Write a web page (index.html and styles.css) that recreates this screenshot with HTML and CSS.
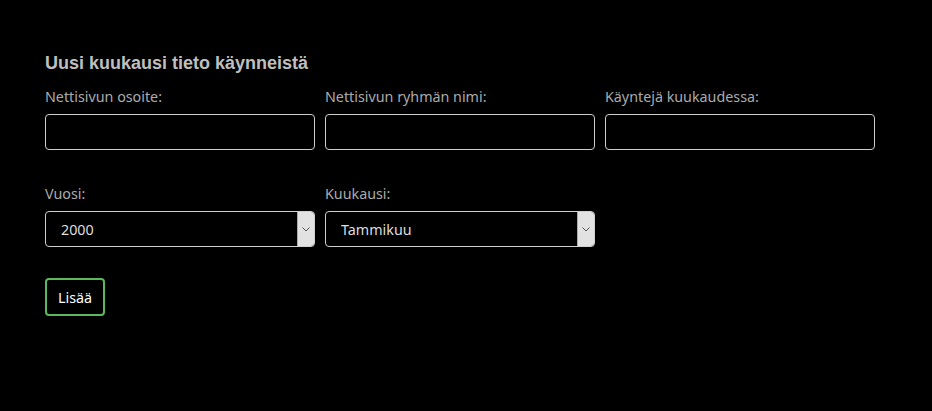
FILE: index.html
```html
<!DOCTYPE html>
<html lang="fi">
<head>
<meta charset="utf-8">
<title>Uusi kuukausi tieto käynneistä</title>
<link rel="stylesheet" href="styles.css">
</head>
<body>
<main class="page">
  <h3 class="title">Uusi kuukausi tieto käynneistä</h3>
  <form class="form">
    <div class="row">
      <div class="field">
        <label class="label">Nettisivun osoite:</label>
        <input class="input" type="text">
      </div>
      <div class="field">
        <label class="label">Nettisivun ryhmän nimi:</label>
        <input class="input" type="text">
      </div>
      <div class="field">
        <label class="label">Käyntejä kuukaudessa:</label>
        <input class="input" type="text">
      </div>
    </div>
    <div class="row row-second">
      <div class="field">
        <label class="label">Vuosi:</label>
        <div class="select-wrap">
          <select class="select"><option>2000</option></select>
          <span class="arrow"><svg width="8" height="5" viewBox="0 0 8 5"><path d="M0.5 0.5 L4 4 L7.5 0.5" fill="none" stroke="#555" stroke-width="1"/></svg></span>
        </div>
      </div>
      <div class="field">
        <label class="label">Kuukausi:</label>
        <div class="select-wrap">
          <select class="select"><option>Tammikuu</option></select>
          <span class="arrow"><svg width="8" height="5" viewBox="0 0 8 5"><path d="M0.5 0.5 L4 4 L7.5 0.5" fill="none" stroke="#555" stroke-width="1"/></svg></span>
        </div>
      </div>
    </div>
    <div class="actions">
      <button class="button" type="button">Lisää</button>
    </div>
  </form>
</main>
</body>
</html>
```
FILE: styles.css
```css
html, body {
  margin: 0;
  background: #000;
}
.page {
  padding: 53px 0 0 45px;
  font-family: "Noto Sans", "Open Sans", sans-serif;
}
.title {
  margin: 0;
  font-family: "Liberation Sans", Arial, sans-serif;
  font-weight: bold;
  font-size: 18px;
  line-height: 20px;
  color: #bfbfbf;
}
.form {
  margin-top: 14px;
}
.row {
  display: flex;
  gap: 10px;
}
.row-second {
  margin-top: 34px;
}
.field {
  display: flex;
  flex-direction: column;
  width: 270px;
}
.label {
  font-size: 14.3px;
  line-height: 20px;
  color: #ababab;
  margin-bottom: 7px;
}
.input {
  box-sizing: border-box;
  width: 270px;
  height: 36px;
  margin: 0;
  background: #000;
  border: 1px solid #cfcfcf;
  border-radius: 4px;
  color: #ddd;
  font: inherit;
  padding: 0 15px;
}
.select-wrap {
  position: relative;
  width: 270px;
  height: 36px;
}
.select {
  appearance: none;
  -webkit-appearance: none;
  box-sizing: border-box;
  width: 270px;
  height: 36px;
  margin: 0;
  background: #000;
  border: 1px solid #cfcfcf;
  border-radius: 4px;
  color: #dedede;
  font-family: "Noto Sans", "Open Sans", sans-serif;
  font-size: 14.3px;
  padding: 1px 15px 0;
}
.arrow {
  position: absolute;
  top: 1px;
  right: 1px;
  width: 16px;
  height: 34px;
  background: #e2e2e2;
  border-left: 1px solid #a8a8a8;
  border-radius: 0 3px 3px 0;
  display: flex;
  align-items: center;
  justify-content: center;
}
.actions {
  margin-top: 31px;
}
.button {
  box-sizing: border-box;
  width: 60px;
  height: 38px;
  background: #000;
  border: 2px solid #5cb85c;
  border-radius: 4px;
  color: #fff;
  font-family: "Noto Sans", "Open Sans", sans-serif;
  font-size: 14.3px;
  padding: 0;
  cursor: pointer;
}
```
